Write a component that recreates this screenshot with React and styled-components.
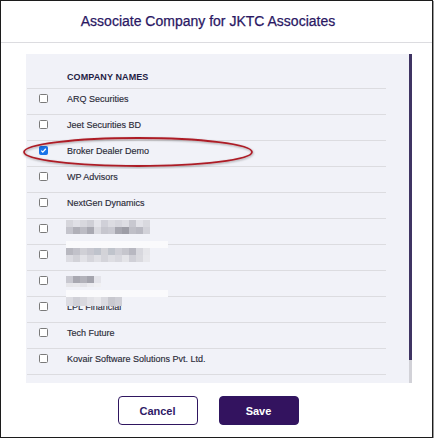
import React, { useState } from "react";
import styled, { createGlobalStyle } from "styled-components";

const GlobalStyle = createGlobalStyle`
  html, body {
    margin: 0;
    padding: 0;
    background: #ffffff;
  }
  * {
    box-sizing: border-box;
  }
`;

const Dialog = styled.div`
  position: relative;
  width: 433px;
  height: 438px;
  border: 1px solid #1c1c1c;
  box-shadow: 1px 1px 1px #9a9a9a;
  background: #ffffff;
  font-family: "Liberation Sans", Arial, sans-serif;
  display: flex;
  flex-direction: column;
`;

const Header = styled.div`
  height: 42px;
  border-bottom: 1px solid #dcdce0;
  display: flex;
  align-items: center;
  justify-content: center;
  padding: 0 17px 1px 0;
`;

const Title = styled.h1`
  margin: 0;
  font-size: 14px;
  font-weight: 400;
  color: #2a1763;
  -webkit-text-stroke: 0.25px #2a1763;
`;

const Body = styled.div`
  padding: 11px 20px 0 25px;
`;

const Panel = styled.div`
  height: 329px;
  background: #f1f2f8;
  display: flex;
`;

const List = styled.div`
  flex: 1;
  margin: 0 23px 0 1px;
  overflow: hidden;
`;

const HeadRow = styled.div`
  height: 35px;
  border-bottom: 1px solid #dcdce0;
  padding: 19px 0 0 40px;
  font-size: 9px;
  font-weight: 700;
  line-height: 9px;
  color: #1f1d45;
  letter-spacing: 0.1px;
`;

const Row = styled.div`
  position: relative;
  height: 26px;
  border-bottom: 1px solid #dcdce0;
  display: flex;
  align-items: flex-start;
  padding: 5px 0 0 12px;
  gap: 19px;
`;

const Box = styled.span`
  width: 9px;
  height: 9px;
  flex: none;
  border-radius: 1.5px;
  border: 1px solid ${(p) => (p.$checked ? "#1a73e8" : "#7a7a7a")};
  background: ${(p) => (p.$checked ? "#1a73e8" : "#ffffff")};
  display: flex;
  align-items: center;
  justify-content: center;
  cursor: pointer;
`;

const Name = styled.span`
  font-size: 9px;
  line-height: 9px;
  padding-top: 0.5px;
  color: #2b2b38;
  -webkit-text-stroke: 0.15px #2b2b38;
`;

const Mosaic = styled.div`
  position: absolute;
  left: 39px;
  top: ${(p) => p.$top}px;
  display: flex;
  flex-direction: column;
`;

const Strip = styled.div`
  display: flex;
  height: ${(p) => p.$h || 7}px;
`;

const Cell = styled.span`
  width: ${(p) => p.$w || 7}px;
  height: 100%;
  background: ${(p) => p.$c};
`;

const Track = styled.div`
  width: 3px;
  background: #d2d2d8;
  display: flex;
  flex-direction: column;
`;

const Thumb = styled.div`
  background: #3f3463;
`;

const Footer = styled.div`
  flex: 1;
  display: flex;
  justify-content: center;
  align-items: flex-start;
  gap: 21px;
  padding: 13px 17px 0 0;
`;

const Button = styled.button`
  width: 80px;
  height: 29px;
  border-radius: 4px;
  font-family: "Liberation Sans", Arial, sans-serif;
  font-size: 11px;
  font-weight: 700;
  cursor: pointer;
  border: 1px solid #2f1660;
  background: ${(p) => (p.$primary ? "#33135f" : "#ffffff")};
  color: ${(p) => (p.$primary ? "#ffffff" : "#2f1a66")};
`;

const Highlight = styled.svg`
  position: absolute;
  left: 20px;
  top: 134px;
  width: 236px;
  height: 34px;
  pointer-events: none;
`;

const Check = () => (
  <svg width="7" height="7" viewBox="0 0 10 10">
    <path d="M1.8 5.2 L4 7.3 L8.3 2.5" fill="none" stroke="#fff" strokeWidth="1.8" />
  </svg>
);

const light = "#fafafc";
const mosaics = {
  5: {
    top: 1,
    strips: [
      { cells: ["#d6d6dc", "#e0e0e6", "#d8d8de", "#cfcfd6", "#e4e4ea", "#d0d0d8", "#dcdce2", "#d6d6dd", "#dddde3", "#c8c8d0", "#e2e2e8", "#d9d9df"] },
      { cells: ["#c4c4cc", "#b0b0b8", "#bcbcc4", "#a9a9b2", "#dadae0", "#c6c6ce", "#cacad2", "#a7a7b0", "#9d9da6", "#bfbfc7", "#b9b9c2", "#d2d2d9"] },
    ],
  },
  6: {
    top: -4,
    strips: [
      { cells: [light], w: 102 },
      { cells: ["#b8b8c0", "#c2c2ca", "#d0d0d6", "#c8c8d0", "#bfc3cc", "#d3d3d8", "#c0c4cc", "#cfcfd6", "#c6c6cd", "#b8b8c1", "#d8d8de", "#e6e6ea"] },
      { cells: ["#dcdce2", "#d2d2d8", "#e2e2e7", "#d6d6dc", "#e0e0e5", "#d4d4da", "#dedee3", "#d8d8de", "#e4e4e8", "#d0d0d7", "#dadadf", "#e8e8ec"] },
    ],
  },
  7: {
    top: 5,
    strips: [
      { cells: ["#c8c8d0", "#a8a8b1", "#b2b2ba", "#a4a4ad", "#e4e4ea"] },
      { cells: ["#e6e6ea", "#e8e8ec", "#e4e4e9", "#ececf0", "#f0f0f3"], h: 4 },
    ],
  },
  8: {
    top: -7,
    strips: [
      { cells: [light], w: 102 },
      { cells: ["#dcdce2", "#d0d0d7", "#d8d8de", "#e2e2e7", "#e8e8ec", "#dadae0", "#c8c8cf", "#cfcfd6"], h: 9 },
    ],
  },
};

const initialCompanies = [
  "ARQ Securities",
  "Jeet Securities BD",
  "Broker Dealer Demo",
  "WP Advisors",
  "NextGen Dynamics",
  "",
  "",
  "",
  "LPL Financial",
  "Tech Future",
  "Kovair Software Solutions Pvt. Ltd.",
];

const App = () => {
  const [checked, setChecked] = useState({ 2: true });

  const toggle = (i) => setChecked((prev) => ({ ...prev, [i]: !prev[i] }));

  return (
    <>
      <GlobalStyle />
      <Dialog>
        <Header>
          <Title>Associate Company for JKTC Associates</Title>
        </Header>
        <Body>
          <Panel>
            <List>
              <HeadRow>COMPANY NAMES</HeadRow>
              {initialCompanies.map((name, i) => (
                <Row key={i}>
                  <Box $checked={!!checked[i]} onClick={() => toggle(i)}>
                    {checked[i] && <Check />}
                  </Box>
                  <Name>{name}</Name>
                  {mosaics[i] && (
                    <Mosaic $top={mosaics[i].top}>
                      {mosaics[i].strips.map((s, si) => (
                        <Strip key={si} $h={s.h}>
                          {s.cells.map((c, ci) => (
                            <Cell key={ci} $c={c} $w={s.w} />
                          ))}
                        </Strip>
                      ))}
                    </Mosaic>
                  )}
                </Row>
              ))}
            </List>
            <Track>
              <Thumb style={{ height: "306px" }} />
            </Track>
          </Panel>
        </Body>
        <Footer>
          <Button>Cancel</Button>
          <Button $primary>Save</Button>
        </Footer>
        <Highlight viewBox="0 0 236 34">
          <defs>
            <filter id="sh" x="-10%" y="-30%" width="120%" height="160%">
              <feDropShadow dx="0.5" dy="1" stdDeviation="0.8" floodColor="#000" floodOpacity="0.35" />
            </filter>
          </defs>
          <ellipse cx="117" cy="17" rx="114" ry="14" fill="none" stroke="#ad1f28" strokeWidth="1.8" filter="url(#sh)" />
        </Highlight>
      </Dialog>
    </>
  );
};

export default App;
